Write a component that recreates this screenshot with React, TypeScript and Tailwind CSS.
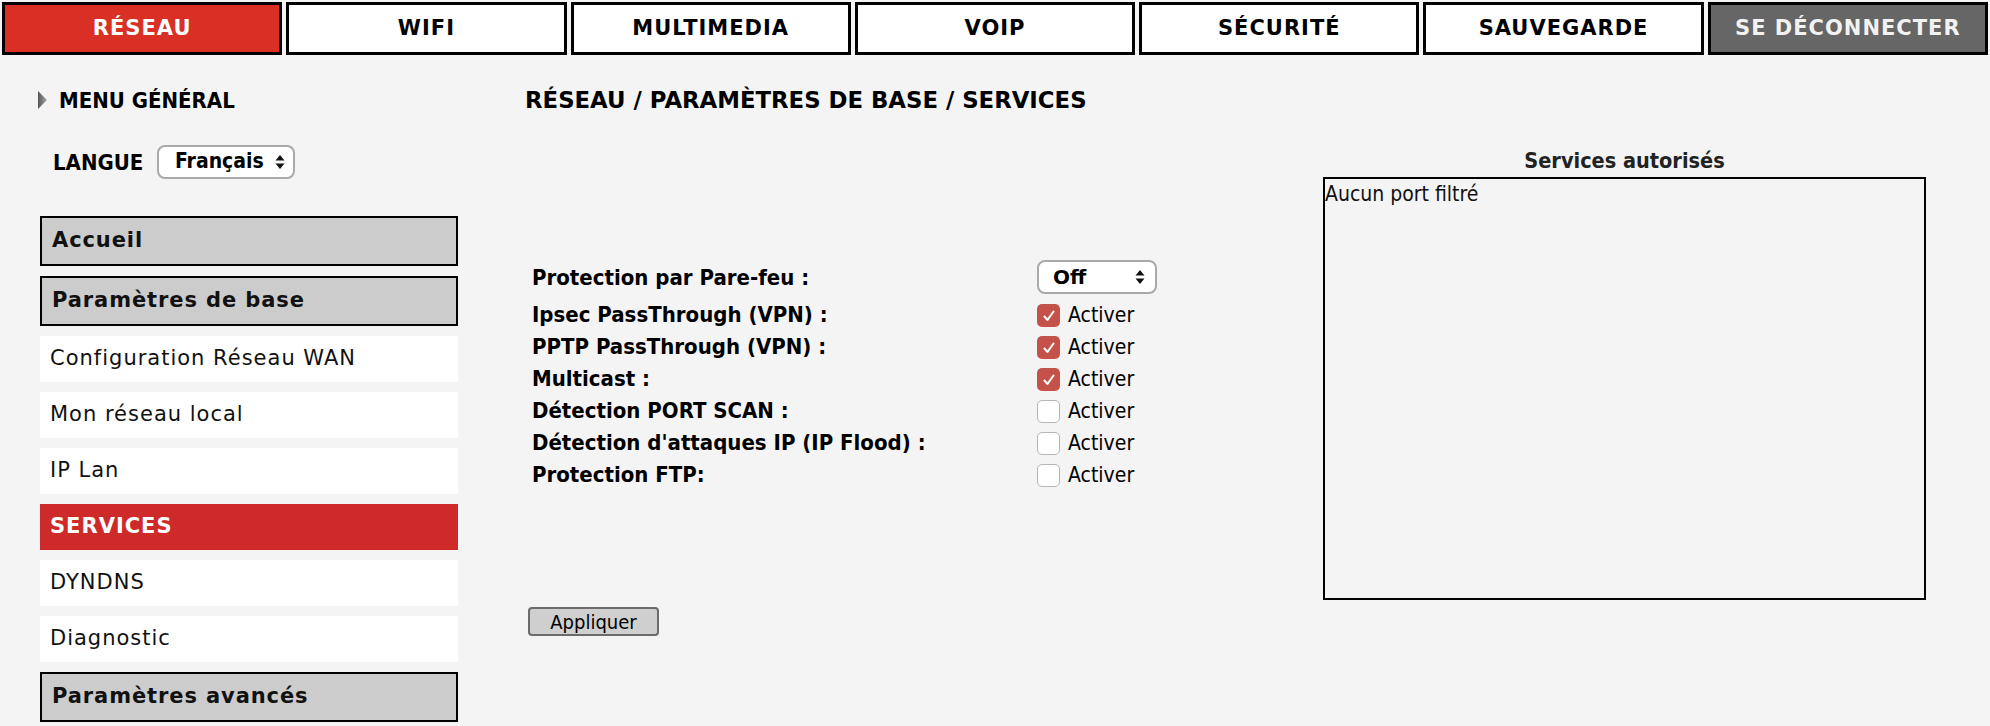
import React from "react";

const verdana = "font-['DejaVu_Sans',sans-serif]";
const tahoma = "font-['DejaVu_Sans_Condensed','DejaVu_Sans',sans-serif]";

const tabs = [
  { label: "RÉSEAU", cls: "bg-[#d92f25] text-white" },
  { label: "WIFI", cls: "bg-white text-black" },
  { label: "MULTIMEDIA", cls: "bg-white text-black" },
  { label: "VOIP", cls: "bg-white text-black" },
  { label: "SÉCURITÉ", cls: "bg-white text-black" },
  { label: "SAUVEGARDE", cls: "bg-white text-black" },
  { label: "SE DÉCONNECTER", cls: "bg-[#666666] text-[#f2f2f2]" },
];

type MenuItem = { label: string; kind: "header" | "item" | "active" };

const menu: MenuItem[] = [
  { label: "Accueil", kind: "header" },
  { label: "Paramètres de base", kind: "header" },
  { label: "Configuration Réseau WAN", kind: "item" },
  { label: "Mon réseau local", kind: "item" },
  { label: "IP Lan", kind: "item" },
  { label: "SERVICES", kind: "active" },
  { label: "DYNDNS", kind: "item" },
  { label: "Diagnostic", kind: "item" },
  { label: "Paramètres avancés", kind: "header" },
];

const options = [
  { label: "Ipsec PassThrough (VPN) :", checked: true },
  { label: "PPTP PassThrough (VPN) :", checked: true },
  { label: "Multicast :", checked: true },
  { label: "Détection PORT SCAN :", checked: false },
  { label: "Détection d'attaques IP (IP Flood) :", checked: false },
  { label: "Protection FTP:", checked: false },
];

const SelectArrows = () => (
  <svg width="10" height="16" viewBox="0 0 10 16" className="shrink-0">
    <polygon points="5,1 9.5,6.5 0.5,6.5" fill="#111" />
    <polygon points="0.5,9.5 9.5,9.5 5,15" fill="#111" />
  </svg>
);

const Checkbox = ({ checked }: { checked: boolean }) =>
  checked ? (
    <div className="w-[23px] h-[23px] rounded-[5px] bg-[#c4514a] flex items-center justify-center">
      <svg width="14" height="14" viewBox="0 0 14 14">
        <path d="M2.5 7.5 L5.5 11 L11.5 2.5" stroke="#fff" strokeWidth="2" fill="none" strokeLinecap="round" strokeLinejoin="round" />
      </svg>
    </div>
  ) : (
    <div className="w-[23px] h-[23px] rounded-[5px] bg-white border border-[#b5b5b5]" />
  );

export default function App() {
  return (
    <div className="min-h-[726px] bg-[#f4f4f4] text-black">
      <nav className="flex gap-[4px] px-[2px] pt-[2px]">
        {tabs.map((t) => (
          <div
            key={t.label}
            className={`flex-1 h-[53px] border-[3px] border-black flex items-center justify-center ${verdana} font-bold text-[21px] tracking-[1px] ${t.cls}`}
          >
            {t.label}
          </div>
        ))}
      </nav>

      <div className="flex">
        <aside className="w-[418px] ml-[40px] shrink-0">
          <div className="mt-[32px] h-[26px] flex items-center">
            <svg width="9" height="18" viewBox="0 0 9 18" className="mr-[12px] -ml-[2px]">
              <defs>
                <linearGradient id="tri" x1="0" y1="0" x2="1" y2="0">
                  <stop offset="0" stopColor="#555" />
                  <stop offset="1" stopColor="#aaa" />
                </linearGradient>
              </defs>
              <polygon points="0,0 9,9 0,18" fill="url(#tri)" />
            </svg>
            <span className={`${tahoma} font-bold text-[22px]`}>MENU GÉNÉRAL</span>
          </div>

          <div className="mt-[32px] flex items-center ml-[13px]">
            <span className={`${tahoma} font-bold text-[22px] w-[104px]`}>LANGUE</span>
            <div className="w-[138px] h-[34px] rounded-[8px] border-2 border-[#a9a9a9] bg-white flex items-center justify-between pl-[16px] pr-[8px]">
              <span className={`${tahoma} font-bold text-[21px]`}>Français</span>
              <SelectArrows />
            </div>
          </div>

          <div className="mt-[37px] flex flex-col gap-[10px]">
            {menu.map((m) =>
              m.kind === "header" ? (
                <div
                  key={m.label}
                  className={`h-[50px] border-2 border-black bg-[#cccccc] flex items-center pl-[10px] ${verdana} font-bold text-[21px] tracking-[0.9px] text-[#111]`}
                >
                  {m.label}
                </div>
              ) : m.kind === "active" ? (
                <div
                  key={m.label}
                  className={`h-[46px] bg-[#ce2a29] flex items-center pl-[10px] ${verdana} font-bold text-[21px] tracking-[1px] text-white`}
                >
                  {m.label}
                </div>
              ) : (
                <div
                  key={m.label}
                  className={`h-[46px] bg-white flex items-center pl-[10px] ${verdana} text-[21px] tracking-[1px] text-[#111]`}
                >
                  {m.label}
                </div>
              )
            )}
          </div>
        </aside>

        <main className="flex-1 ml-[67px] mr-[64px]">
          <h1 className={`mt-[32px] h-[26px] flex items-center ${verdana} font-bold text-[22.8px]`}>
            RÉSEAU / PARAMÈTRES DE BASE / SERVICES
          </h1>

          <div className="flex">
            <div className="flex-1">
              <div className={`mt-[147px] ml-[7px] ${tahoma}`}>
                <div className="flex h-[38px]">
                  <div className="w-[505px] h-[34px] flex items-center font-bold text-[22px]">Protection par Pare-feu :</div>
                  <div className={`w-[120px] h-[34px] rounded-[8px] border-2 border-[#a9a9a9] bg-white flex items-center justify-between pl-[14px] pr-[10px]`}>
                    <span className={`${verdana} font-bold text-[20px]`}>Off</span>
                    <SelectArrows />
                  </div>
                </div>
                {options.map((o) => (
                  <div key={o.label} className="flex items-center h-[32px]">
                    <div className="w-[505px] font-bold text-[22px]">{o.label}</div>
                    <div className="flex items-center gap-[8px] mt-[3px]">
                      <Checkbox checked={o.checked} />
                      <span className="text-[21px]">Activer</span>
                    </div>
                  </div>
                ))}
              </div>

              <button
                className={`mt-[117px] ml-[3px] w-[131px] h-[29px] rounded-[4px] border-2 border-[#6b6b6b] bg-[#cfcfcf] flex items-center justify-center ${tahoma} text-[20px] leading-none`}
              >
                Appliquer
              </button>
            </div>

            <div className={`w-[603px] shrink-0 ${tahoma}`}>
              <div className="mt-[36px] h-[24px] flex items-center justify-center font-bold text-[21.5px] text-[#222]">
                Services autorisés
              </div>
              <div className="mt-[4px] h-[423px] border-2 border-black pt-[3px] text-[21px] leading-[24px] text-[#111]">
                Aucun port filtré
              </div>
            </div>
          </div>
        </main>
      </div>
    </div>
  );
}
